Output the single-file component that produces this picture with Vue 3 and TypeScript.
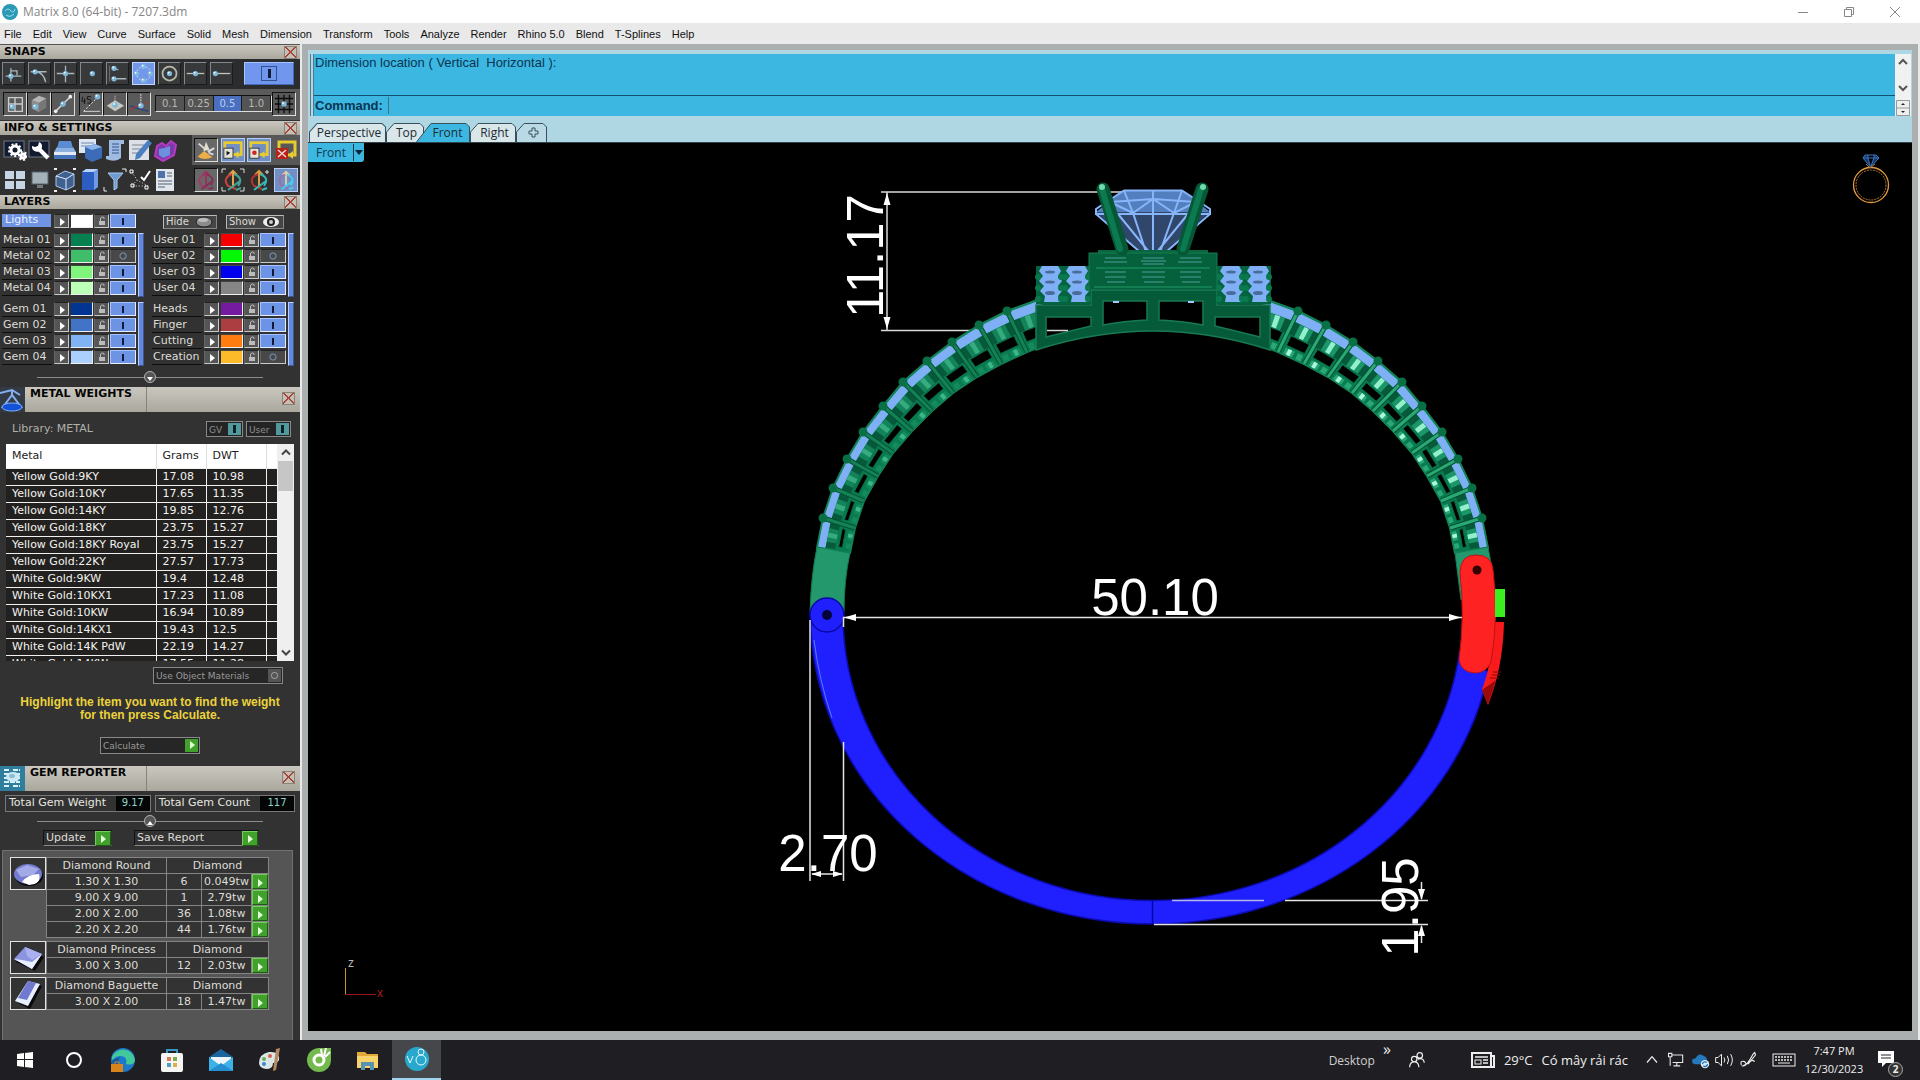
<script setup lang="ts">
import { ref } from 'vue'

interface Icon { name: string; art: string; on?: boolean; raised?: boolean }
interface Layer { name: string; color: string; on: boolean }
interface GemRow { size: string; count: number; weight: string }
interface GemGroup { name: string; kind: string; art: string; rows: GemRow[] }
type Pt = [number, number]

const command = ref('')

const menus = ['File', 'Edit', 'View', 'Curve', 'Surface', 'Solid', 'Mesh', 'Dimension', 'Transform', 'Tools', 'Analyze', 'Render', 'Rhino 5.0', 'Blend', 'T-Splines', 'Help']

const dot = (x: number, y: number, r = 3) => `<circle cx="${x}" cy="${y}" r="${r}" fill="#7db9dc"/><circle cx="${x - 1}" cy="${y - 1}" r="1" fill="#fff"/>`
const ln = (d: string, c = '#a9b8bf', w = 1.5) => `<path d="${d}" fill="none" stroke="${c}" stroke-width="${w}"/>`

const snaps: Icon[] = [
  { name: 'Perpendicular', art: ln('M3 15H21M9 6V21M9 9H16V14') + dot(9, 15) },
  { name: 'Tangent', art: ln('M2 10H20M8 10Q17 11 19 22') + dot(7, 10) },
  { name: 'Intersection', art: ln('M2 12H22M12 3V22') + dot(12, 12) },
  { name: 'Point', art: dot(13, 12) },
  { name: 'Vertex', art: ln('M10 18H22M9 6L13 8') + dot(8, 6) + dot(8, 18) + ln('M3 3V21', '#777', 1) },
  { name: 'Quadrant', on: true, art: '<circle cx="12" cy="12" r="8" fill="none" stroke="#dce9f5" stroke-dasharray="2 2"/>' + dot(12, 4) + dot(12, 20) + dot(4, 12) + dot(20, 12) },
  { name: 'Center', art: '<circle cx="12" cy="12" r="8" fill="none" stroke="#b9b9aa" stroke-width="2"/>' + dot(12, 12) },
  { name: 'Mid', art: ln('M2 12H22', '#c2c4bb') + dot(12, 12) },
  { name: 'End', art: ln('M6 12H22', '#c2c4bb') + dot(5, 12) },
]

const modes: Icon[] = [
  { name: 'Planar', art: ln('M5 5H20V20H5ZM12 5V20M5 12H20', '#c8cccb') + dot(9, 15) },
  { name: 'Solid', art: '<path d="M4 8L12 3L20 6L12 11Z" fill="#b5b5b5"/><path d="M4 8L12 11V21L4 17Z" fill="#8e8e8e"/><path d="M12 11L20 6V16L12 21Z" fill="#777"/>' + dot(8, 15) },
  { name: 'Line', art: ln('M4 20L20 4', '#ddd') + '<circle cx="4" cy="20" r="2" fill="#eee"/><circle cx="20" cy="4" r="2" fill="#eee"/>' + dot(12, 12) },
]
const guides: Icon[] = [
  { name: 'Angle', art: '<path d="M4 20L20 4" stroke="#fff" stroke-dasharray="2 2"/><path d="M4 20H22" stroke="#ddd"/>' + ln('M3 4L2 9H6M5 6V12M12 4H8V7Q12 6 12 9Q12 12 8 11', '#111', 1) + dot(19, 4) },
  { name: 'Plane', art: '<path d="M3 14L12 8L22 14L12 20Z" fill="#c6c6be"/><path d="M12 3V10" stroke="#ddd" stroke-dasharray="1 1"/>' + dot(12, 13) },
  { name: 'Axis', art: ln('M2 14L22 20', '#27418c') + ln('M2 18L22 10', '#b1322d', 1) + '<path d="M14 1V14" stroke="#eee" stroke-dasharray="2 1"/>' + dot(14, 14) },
]
const gridSizes = ['0.1', '0.25', '0.5', '1.0']
const gridIcon = ln('M6 2V22M12 2V22M18 2V22M2 6H22M2 12H22M2 18H22', '#0c0c0c', 1.5) + dot(12, 12)

const gear = (x: number, y: number, r: number) => `<circle cx="${x}" cy="${y}" r="${r}" fill="none" stroke="#fff" stroke-width="3"/><circle cx="${x}" cy="${y}" r="${r + 2}" fill="none" stroke="#fff" stroke-width="2" stroke-dasharray="2 2"/>`
const gumball = (c1: string, c2: string, c3: string) => ln('M12 20V3M8 7L12 3L16 7', c1, 2) + ln('M11 6Q1 10 7 18L15 21', c2, 2) + ln('M13 6Q23 10 17 18M7 22L19 13M15 22L20 20', c3, 2)
const recorder = (inner: string) => `<rect x="3" y="4" width="18" height="13" fill="none" stroke="#e8cb31" stroke-width="3"/><rect x="2" y="10" width="10" height="11" fill="#e4e4d8" stroke="#333"/>${inner}<path d="M13 17L18 13V21Z" fill="#e8cb31"/>`

const infoTop: Icon[] = [
  { name: 'Settings', art: '<rect x="1" y="3" width="20" height="16" fill="#111a2e" stroke="#72798a"/>' + gear(12, 12, 4) + gear(20, 18, 2) },
  { name: 'Tools', art: '<rect x="1" y="3" width="20" height="16" fill="#111a2e" stroke="#72798a"/>' + ln('M9 9L20 20', '#fff', 4) + '<path d="M4 8A5 5 0 1 0 11 4L10 8L7 9Z" fill="#fff"/>' },
  { name: 'Layers', art: '<path d="M4 9H20L23 14H1Z" fill="#8bb1e0"/><path d="M1 14H23V17H1Z" fill="#e2ebf4"/><path d="M1 17H23V21H1Z" fill="#4674bb"/><path d="M6 3H18L20 10H4Z" fill="#5b8bd0"/>' },
  { name: 'Box list', art: '<rect x="1" y="1" width="17" height="14" fill="#dde6f1"/><path d="M3 5H16M3 8H16" stroke="#6f8bb1"/><path d="M7 9L17 6L24 9V20L14 24L7 20Z" fill="#3c6cb8"/><path d="M7 9L17 6L24 9L14 12Z" fill="#8db5e8"/>' },
  { name: 'Script', art: '<path d="M6 2H21V6H18V20Q12 25 3 21V18H6Z" fill="#9fbbe2"/><path d="M9 6H16M9 9H16M9 12H16M9 15H16" stroke="#31548c"/>' },
  { name: 'Notes', art: '<rect x="1" y="2" width="20" height="20" fill="#dbe0e6"/><path d="M4 7H16M4 11H14M4 15H10" stroke="#7d8793"/><path d="M8 16L20 2L24 5L12 20L7 22Z" fill="#4b7fc0"/>' },
  { name: 'Gem', art: '<path d="M4 8L9 5L13 8L18 3L23 7L21 17L10 23L2 18Z" fill="#7c3aa8" stroke="#b53ac4" stroke-width="2"/><path d="M6 11L11 10L17 8V17L10 20L6 17Z" fill="#6d8fdc"/>' },
]
const infoBottom: Icon[] = [
  { name: 'Four views', art: '<path d="M2 3H11V11H2ZM13 3H22V11H13ZM2 13H11V21H2ZM13 13H22V21H13Z" fill="#c6d4e4"/>' },
  { name: 'Display', art: '<rect x="4" y="4" width="16" height="12" fill="#a5b1b8" stroke="#53626d"/><path d="M9 17H15V20H9Z" fill="#73777a"/>' },
  { name: 'Cage', art: '<path d="M3 8L12 3L21 6V18L13 22L3 18Z" fill="#40608f" stroke="#a8c8ef"/><path d="M3 8L13 11L21 6M13 11V22" stroke="#dcecff" fill="none"/>' + ln('M1 1H4M20 1H23M1 23H4M20 23H23', '#eee', 2) },
  { name: 'Manual', art: '<path d="M4 4L8 1H20V19L16 22H4Z" fill="#2c5dc0"/><path d="M4 4L8 1H20L16 4Z" fill="#b6d2f5"/><path d="M16 4L20 1V19L16 22Z" fill="#6f9be6"/>' },
  { name: 'Filter', art: '<path d="M5 5H20L14 12V20L11 22V12Z" fill="#6f9bd2" stroke="#a9caec"/>' + ln('M19 1H23V4M1 19V23H4', '#eee', 1) },
  { name: 'Pick points', art: '<path d="M4 4L9 12L4 18H20L9 12" fill="none" stroke="#ddd" stroke-dasharray="1 2"/><path d="M2 2H5V5H2ZM3 16H6V19H3ZM17 18H20V21H17Z" fill="none" stroke="#fff"/>' + ln('M13 9L16 12L22 3', '#fff', 2) },
  { name: 'Report', art: '<rect x="3" y="1" width="18" height="22" fill="#e1e6ec"/><rect x="5" y="3" width="7" height="7" fill="#4d73aa"/><path d="M14 5H19M14 8H19M5 13H19M5 16H19M5 19H12" stroke="#53606e"/>' },
]
const recordTop: Icon[] = [
  { name: 'Brush', raised: true, art: '<path d="M3 19L10 13L19 20Q9 24 3 19Z" fill="#efae48"/><path d="M9 13L12 3L16 12Z" fill="#e4dfca"/><path d="M4 5L11 11M21 10L14 14M20 17L15 15" stroke="#ddd" stroke-width="2"/>' },
  { name: 'Play', on: true, art: recorder('<path d="M5 13V18L9 15Z" fill="#111"/>') },
  { name: 'Record', on: true, art: recorder('<circle cx="7" cy="15" r="2.5" fill="#cf2820"/>') },
  { name: 'Stop', art: '<rect x="5" y="4" width="16" height="13" fill="none" stroke="#e8cb31" stroke-width="3"/><path d="M14 17L19 13V21Z" fill="#e8cb31"/><rect x="2" y="10" width="12" height="11" fill="#b7221b"/>' + ln('M4 12L12 19M12 12L4 19', '#f0d7d0', 1.5) },
]
const recordBottom: Icon[] = [
  { name: 'Gumball', raised: true, art: gumball('#9e2f5c', '#a63865', '#813057') },
  { name: 'Gumball fit', art: gumball('#e0a74b', '#c8443a', '#43a59a') + ln('M1 5V1H5M19 1H23V5M1 19V23H5M19 23H23V19', '#ddd', 1) },
  { name: 'Gumball align', art: gumball('#d79d45', '#b9332c', '#38b7b7') + ln('M20 2V6M18 4H22', '#ddd', 1) },
  { name: 'Gumball on', on: true, art: gumball('#e5cfa6', '#9c6fa5', '#47cbee') },
]

const L = (name: string, color: string, on = true): Layer => ({ name, color, on })
const layerBlocks: Layer[][][] = [
  [
    [L('Metal 01', '#058050'), L('Metal 02', '#40bd68', false), L('Metal 03', '#80f57d'), L('Metal 04', '#bcffb6')],
    [L('User 01', '#f40000'), L('User 02', '#05f705', false), L('User 03', '#0000ef'), L('User 04', '#858585')],
  ],
  [
    [L('Gem 01', '#023591'), L('Gem 02', '#4173c6'), L('Gem 03', '#7fb3f4'), L('Gem 04', '#acd0fc')],
    [L('Heads', '#741b9f'), L('Finger', '#ac3d40'), L('Cutting', '#ff7c10'), L('Creation', '#fdbb2a', false)],
  ],
]

const metals: [string, string, string][] = [
  ['Yellow Gold:9KY', '17.08', '10.98'],
  ['Yellow Gold:10KY', '17.65', '11.35'],
  ['Yellow Gold:14KY', '19.85', '12.76'],
  ['Yellow Gold:18KY', '23.75', '15.27'],
  ['Yellow Gold:18KY Royal', '23.75', '15.27'],
  ['Yellow Gold:22KY', '27.57', '17.73'],
  ['White Gold:9KW', '19.4', '12.48'],
  ['White Gold:10KX1', '17.23', '11.08'],
  ['White Gold:10KW', '16.94', '10.89'],
  ['White Gold:14KX1', '19.43', '12.5'],
  ['White Gold:14K PdW', '22.19', '14.27'],
  ['White Gold:14KW', '17.55', '11.28'],
]

const gems: GemGroup[] = [
  {
    name: 'Diamond Round', kind: 'Diamond',
    art: '<ellipse cx="18" cy="18" rx="14" ry="10" fill="#070709"/><ellipse cx="17" cy="16" rx="14" ry="10" fill="#737cd0"/><path d="M5 12L16 7L28 11L22 17L10 19Z" fill="#a3aae8"/><path d="M11 24Q17 16 28 16Q31 26 18 27Z" fill="#fff"/>',
    rows: [
      { size: '1.30 X 1.30', count: 6, weight: '0.049tw' },
      { size: '9.00 X 9.00', count: 1, weight: '2.79tw' },
      { size: '2.00 X 2.00', count: 36, weight: '1.08tw' },
      { size: '2.20 X 2.20', count: 44, weight: '1.76tw' },
    ],
  },
  {
    name: 'Diamond Princess', kind: 'Diamond',
    art: '<path d="M5 20L16 8L33 15L24 29Z" fill="#09090c"/><path d="M3 17L14 5L31 12L21 27Z" fill="#8c94e2"/><path d="M3 17L11 18L21 20L31 12L21 27Z" fill="#e8efff"/><path d="M14 5L16 14L21 18L31 12Z" fill="#a9b0f0"/>',
    rows: [{ size: '3.00 X 3.00', count: 12, weight: '2.03tw' }],
  },
  {
    name: 'Diamond Baguette', kind: 'Diamond',
    art: '<path d="M7 25L20 6L31 8L19 31Z" fill="#09090c"/><path d="M4 23L17 3L29 6L17 28Z" fill="#e7efff"/><path d="M7 20L17 3L25 5L16 22Z" fill="#7179cf"/>',
    rows: [{ size: '3.00 X 2.00', count: 18, weight: '1.47tw' }],
  },
]

/* Bracelet geometry: the outer and inner end of each pin on the left shoulder. */
const outer: Pt[] = [[1040, 299], [1007, 311], [979, 325], [952, 342], [927, 361], [903, 382], [883, 406], [863, 432], [847, 459], [833, 488], [823, 518], [817, 548]]
const inner: Pt[] = [[1050, 343], [1027, 352], [1001, 364], [977, 377], [953, 393], [932, 411], [912, 431], [893, 453], [878, 476], [864, 501], [855, 528], [850, 553]]
const at = (i: number, s: number, t: number): Pt => {
  const ox = outer[i][0] + (outer[i + 1][0] - outer[i][0]) * s
  const oy = outer[i][1] + (outer[i + 1][1] - outer[i][1]) * s
  const ix = inner[i][0] + (inner[i + 1][0] - inner[i][0]) * s
  const iy = inner[i][1] + (inner[i + 1][1] - inner[i][1]) * s
  return [Math.round((ox + (ix - ox) * t) * 10) / 10, Math.round((oy + (iy - oy) * t) * 10) / 10]
}
const quad = (i: number, s0: number, s1: number, t0: number, t1: number) =>
  [at(i, s0, t0), at(i, s1, t0), at(i, s1, t1), at(i, s0, t1)].map((p) => p.join(',')).join(' ')
const cells = outer.slice(0, -1).map((_, i) => ({
  blue: quad(i, 0.06, 0.94, 0.04, 0.23),
  shade: quad(i, 0.06, 0.94, 0.25, 0.54),
  mid: quad(i, 0.26, 0.74, 0.25, 0.54),
  shine: quad(i, 0.42, 0.58, 0.25, 0.53),
  hole: quad(i, 0.16, 0.84, 0.55 + i * 0.008, 0.79 - i * 0.005),
  rail: quad(i, 0.18, 0.52, 0.84, 0.98),
  glint: quad(i, 0.28, 0.42, 0.84, 0.98),
  rail2: quad(i, 0.64, 0.84, 0.84, 0.98),
}))
const shoulder = [...outer, ...[...inner].reverse()].map((p) => p.join(',')).join(' ')
const pins = outer.slice(1, -1).map((o, i) => ({ o, n: inner[i + 1] }))
const sides = [
  { id: 'left', shift: '', mid: '#138459', shine: '#36ab80', rail: '#158a5d', glint: '#3bb78a', pin: '#148257' },
  { id: 'right', shift: 'translate(2305 0) scale(-1 1)', mid: '#1c9568', shine: '#93f0cd', rail: '#2aa776', glint: '#a9f7dc', pin: '#2aa875' },
]
const clusters = [1038, 1065, 1219, 1246]

const apps: Icon[] = [
  { name: 'Start', art: '<path d="M4 6L11 5V11H4ZM12 5L20 4V11H12ZM4 12H11V19L4 18ZM12 12H20V20L12 19Z" fill="#fff"/>' },
  { name: 'Search', art: '<circle cx="12" cy="12" r="7" fill="none" stroke="#fff" stroke-width="2"/>' },
  { name: 'Edge', art: '<circle cx="12" cy="12" r="12" fill="#1c78c8"/><path d="M1 9A12 12 0 0 1 24 12Q23 18 15 16Q17 8 9 8Q3 8 1 14Z" fill="#42c99b"/><path d="M9 9Q4 16 12 22Q2 23 1 12Z" fill="#115aa5"/><rect x="0" y="16" width="12" height="8" fill="#d8841c"/><path d="M4 16V14H8V16" fill="none" stroke="#d8841c"/>' },
  { name: 'Store', art: '<path d="M7 6V2H17V6" fill="none" stroke="#3798c6" stroke-width="2"/><rect x="1" y="5" width="22" height="19" rx="2" fill="#f5f5f3"/><path d="M7 9H11V13H7Z" fill="#df7a4f"/><path d="M13 9H17V13H13Z" fill="#7faa50"/><path d="M7 15H11V19H7Z" fill="#4c9fc5"/><path d="M13 15H17V19H13Z" fill="#d9b04a"/>' },
  { name: 'Mail', art: '<path d="M0 9L12 1L24 9V23H0Z" fill="#1b659f"/><path d="M2 9H22V18H2Z" fill="#eef6fb"/><path d="M0 9L12 18L24 9V23H0Z" fill="#3bb2e8"/><path d="M0 23L12 15L24 23Z" fill="#258dd0"/>' },
  { name: 'Paint', art: '<path d="M1 15Q1 6 11 4Q22 3 21 12Q20 15 15 15Q15 21 8 21Q1 20 1 15Z" fill="#dbe6e9"/><circle cx="6" cy="11" r="2" fill="#6fae53"/><circle cx="12" cy="8" r="2" fill="#d4654b"/><circle cx="6" cy="16" r="2" fill="#4486c9"/><path d="M22 0L18 1L15 23L18 22Z" fill="#b6885f"/>' },
  { name: 'Coc Coc', art: '<path d="M24 0V12A12 12 0 1 1 12 0Z" fill="#73b94c"/><circle cx="12" cy="12" r="5" fill="none" stroke="#fff" stroke-width="3"/><circle cx="12" cy="12" r="2" fill="#73b94c"/><path d="M14 1L15 7M19 0L17 8M23 4L18 9" stroke="#fff" stroke-width="2"/>' },
  { name: 'Explorer', art: '<path d="M1 4H9L11 6H22V20H1Z" fill="#e1a937"/><path d="M1 8H22V20H1Z" fill="#f8d36c"/><path d="M5 22V14H18V22H14V18H9V22Z" fill="#5793b2"/>' },
  { name: 'Matrix', on: true, art: '<circle cx="12" cy="12" r="12" fill="#28a8cc"/><path d="M2 9L5 16L8 9" fill="none" stroke="#e8fbff"/><circle cx="16" cy="13" r="5" fill="none" stroke="#e8fbff"/><circle cx="16" cy="5" r="3" fill="none" stroke="#e8fbff"/>' },
]
const tray: Icon[] = [
  { name: 'Hidden icons', art: ln('M6 15L12 8L18 15', '#eee') },
  { name: 'Network', art: ln('M7 6H20V15H8M13 15V19M9 19H17M3 4H7V8H3ZM5 8V19', '#e8e8e8', 1.3) },
  { name: 'OneDrive', art: '<path d="M3 16Q1 10 7 10Q10 3 16 7Q22 9 20 15H16V17H6Z" fill="#2678bd"/><circle cx="18" cy="17" r="5" fill="#d9edf8"/><path d="M15 17A3 3 0 0 1 20 15M21 17A3 3 0 0 1 16 19" fill="none" stroke="#1d6aa9" stroke-width="1.5"/>' },
  { name: 'Volume', art: ln('M2 9H5L9 5V19L5 15H2ZM12 9Q14 12 12 15M16 7Q19 12 16 17M20 5Q24 12 20 19', '#eee', 1.2) },
  { name: 'Pen', art: ln('M4 18Q2 12 8 14Q12 17 6 19Q10 20 18 5L20 3L21 6L12 17Q16 10 20 14', '#eee', 1.4) },
]
</script>

<template>
  <div class="app">
    <header class="titlebar">
      <svg class="logo" viewBox="0 0 16 16"><circle cx="8" cy="8" r="8" fill="#2b98b4" /><path d="M3 7Q6 3 9 7Q12 10 13 5M4 11Q8 14 12 10" fill="none" stroke="#9edcec" /></svg>
      <span class="title">Matrix 8.0 (64-bit) - 7207.3dm</span>
      <div class="winbtns">
        <button aria-label="Minimize"><svg viewBox="0 0 12 12"><path d="M1 6.500H11" stroke="#888" /></svg></button>
        <button aria-label="Restore"><svg viewBox="0 0 12 12"><path d="M1.500 3.500H8.500V10.500H1.500ZM3.500 3V1.500H10.500V8.500H9" fill="none" stroke="#888" /></svg></button>
        <button aria-label="Close"><svg viewBox="0 0 12 12"><path d="M1 1L11 11M11 1L1 11" stroke="#888" /></svg></button>
      </div>
    </header>
    <nav class="menubar"><button v-for="m in menus" :key="m">{{ m }}</button></nav>

    <div class="work">
      <aside class="side">
        <h2 class="bar">SNAPS<button class="x" aria-label="Close snaps"></button></h2>
        <div class="snaps">
          <button v-for="s in snaps" :key="s.name" class="tool" :class="{ on: s.on }" :aria-label="s.name"><svg viewBox="0 0 24 24" v-html="s.art" /></button>
          <button class="master" aria-label="Snaps on"><i></i></button>
        </div>
        <div class="modes">
          <div class="set"><button v-for="s in modes" :key="s.name" :aria-label="s.name"><svg viewBox="0 0 24 24" v-html="s.art" /></button></div>
          <div class="set"><button v-for="s in guides" :key="s.name" :aria-label="s.name"><svg viewBox="0 0 24 24" v-html="s.art" /></button></div>
          <div class="grids"><button v-for="g in gridSizes" :key="g" :class="{ on: g === '0.5' }">{{ g }}</button></div>
          <div class="set"><button aria-label="Grid snap"><svg viewBox="0 0 24 24" v-html="gridIcon" /></button></div>
        </div>

        <h2 class="bar">INFO &amp; SETTINGS<button class="x" aria-label="Close info"></button></h2>
        <div class="info">
          <div class="icons">
            <button v-for="s in infoTop" :key="s.name" :aria-label="s.name"><svg viewBox="0 0 24 24" v-html="s.art" /></button>
          </div>
          <div class="icons rec">
            <button v-for="s in recordTop" :key="s.name" :class="{ on: s.on, raised: s.raised }" :aria-label="s.name"><svg viewBox="0 0 24 24" v-html="s.art" /></button>
          </div>
        </div>
        <div class="info">
          <div class="icons">
            <button v-for="s in infoBottom" :key="s.name" :aria-label="s.name"><svg viewBox="0 0 24 24" v-html="s.art" /></button>
          </div>
          <div class="icons rec plain">
            <button v-for="s in recordBottom" :key="s.name" :class="{ on: s.on, raised: s.raised }" :aria-label="s.name"><svg viewBox="0 0 24 24" v-html="s.art" /></button>
          </div>
        </div>

        <h2 class="bar">LAYERS<button class="x" aria-label="Close layers"></button></h2>
        <div class="layers">
          <div class="lights">
            <div class="layer">
              <span class="lname sel">Lights</span>
              <button class="cell arrow" aria-label="Lights options"></button>
              <button class="cell sw" style="background: #ffffff" aria-label="Lights colour"></button>
              <button class="cell lock" aria-label="Lock Lights"><svg viewBox="0 0 8 10"><path d="M2.500 5V2Q4 0 6 1.500V3" fill="none" stroke="#bbb" /><rect x="1" y="5" width="6" height="4" fill="#bbb" /></svg></button>
              <button class="cell tog on" aria-label="Toggle Lights"></button>
            </div>
            <button class="hs hide">Hide <svg viewBox="0 0 18 12"><ellipse cx="9" cy="6" rx="8" ry="5" fill="#8c8c8c" stroke="#222" /><ellipse cx="8" cy="4" rx="5" ry="2" fill="#bbb" /></svg></button>
            <button class="hs show">Show <svg viewBox="0 0 18 12"><ellipse cx="9" cy="6" rx="8" ry="5" fill="#eee" /><circle cx="9" cy="6" r="4" fill="#222" /><circle cx="9" cy="6" r="2" fill="#ccc" /></svg></button>
          </div>
          <div v-for="(block, b) in layerBlocks" :key="b" class="block">
            <div v-for="(col, c) in block" :key="c" class="lcol">
              <div>
                <div v-for="l in col" :key="l.name" class="layer">
                  <span class="lname">{{ l.name }}</span>
                  <button class="cell arrow" :aria-label="l.name + ' options'"></button>
                  <button class="cell sw" :style="{ background: l.color }" :aria-label="l.name + ' colour'"></button>
                  <button class="cell lock" :aria-label="'Lock ' + l.name"><svg viewBox="0 0 8 10"><path d="M2.500 5V2Q4 0 6 1.500V3" fill="none" stroke="#bbb" /><rect x="1" y="5" width="6" height="4" fill="#bbb" /></svg></button>
                  <button class="cell tog" :class="{ on: l.on }" :aria-label="'Toggle ' + l.name"></button>
                </div>
              </div>
              <i class="vbar"></i>
            </div>
          </div>
          <div class="fold"><button aria-label="Expand layers"></button></div>
        </div>

        <h2 class="bar big">
          <svg class="hicon" viewBox="0 0 25 25"><rect width="25" height="25" fill="#333a45" /><path d="M0 6L12 3L20 8M12 3V10M3 20L12 8L21 20Z" fill="none" stroke="#85aff0" stroke-width="2" /><ellipse cx="12" cy="20" rx="10" ry="4" fill="#1551d8" stroke="#79b1ff" /></svg>
          <span>METAL WEIGHTS</span><button class="x" aria-label="Close metal weights"></button>
        </h2>
        <div class="library">
          <span>Library: METAL</span>
          <button class="flag">GV<i></i></button>
          <button class="flag user">User<i></i></button>
        </div>
        <div class="tablebox">
          <table class="metals">
            <thead><tr><th class="c1">Metal</th><th class="c2">Grams</th><th class="c3">DWT</th><th></th></tr></thead>
            <tbody><tr v-for="m in metals" :key="m[0]"><td>{{ m[0] }}</td><td>{{ m[1] }}</td><td>{{ m[2] }}</td><td></td></tr></tbody>
          </table>
          <div class="scroll">
            <svg viewBox="0 0 16 16"><path d="M4 10L8 6L12 10" fill="none" stroke="#444" stroke-width="2" /></svg>
            <i></i>
            <svg class="dn" viewBox="0 0 16 16"><path d="M4 6L8 10L12 6" fill="none" stroke="#444" stroke-width="2" /></svg>
          </div>
        </div>
        <button class="obj">Use Object Materials<i></i></button>
        <p class="hint">Highlight the item you want to find the weight<br>for then press Calculate.</p>
        <button class="calc">Calculate<i class="go"></i></button>

        <h2 class="bar big">
          <svg class="hicon" viewBox="0 0 25 25"><rect width="25" height="25" fill="#2f7e9d" /><path d="M4 4H10M13 4H20M4 8H20M4 12H20M4 16H20M4 20H10M13 20H20" stroke="#d6f3fa" stroke-width="2" stroke-dasharray="5 1" /><ellipse cx="13" cy="11" rx="7" ry="5" fill="#c9e9f5" /><ellipse cx="12" cy="10" rx="3" ry="2" fill="#8dbbd0" /></svg>
          <span>GEM REPORTER</span><button class="x" aria-label="Close gem reporter"></button>
        </h2>
        <div class="totals">
          <div class="total"><span>Total Gem Weight</span><output>9.17</output></div>
          <div class="total"><span>Total Gem Count</span><output>117</output></div>
        </div>
        <div class="fold up"><button aria-label="Collapse report"></button></div>
        <div class="acts">
          <button class="act">Update<i class="go"></i></button>
          <button class="act save">Save Report<i class="go"></i></button>
        </div>
        <div class="report">
          <div v-for="g in gems" :key="g.name" class="gem">
            <svg class="thumb" viewBox="0 0 34 31" v-html="g.art" />
            <table>
              <colgroup><col class="g1"><col class="g2"><col class="g3"><col class="g4"></colgroup>
              <tbody>
                <tr><th>{{ g.name }}</th><th colspan="3">{{ g.kind }}</th></tr>
                <tr v-for="r in g.rows" :key="r.size"><td>{{ r.size }}</td><td>{{ r.count }}</td><td>{{ r.weight }}</td><td><button class="go" :aria-label="'Select ' + r.size"></button></td></tr>
              </tbody>
            </table>
          </div>
        </div>
      </aside>

      <main class="stage">
        <section class="console">
          <i class="grip"></i>
          <div class="cmd">
            <p class="history">Dimension location ( Vertical&nbsp; Horizontal ):</p>
            <div class="prompt"><label for="cmd">Command:</label><input id="cmd" v-model="command" type="text"></div>
          </div>
          <div class="cscroll">
            <svg viewBox="0 0 16 16"><path d="M4 10L8 6L12 10" fill="none" stroke="#555" stroke-width="2" /></svg>
            <svg class="down" viewBox="0 0 16 16"><path d="M4 6L8 10L12 6" fill="none" stroke="#555" stroke-width="2" /></svg>
            <svg viewBox="0 0 16 16"><path d="M1.500 0.500H14.500V15.500H1.500ZM1 8H15" fill="#eee" stroke="#999" /><path d="M6 5L8 3L10 5ZM6 11L8 13L10 11Z" fill="#222" /></svg>
          </div>
        </section>
        <nav class="tabs">
          <button class="tab t1"><svg viewBox="0 0 76 19" preserveAspectRatio="none"><path d="M.5 19V9L8 .5H72L75.500 4V19" /></svg><span>Perspective</span></button>
          <button class="tab t2"><svg viewBox="0 0 38 19" preserveAspectRatio="none"><path d="M.5 19V9L8 .5H34L37.500 4V19" /></svg><span>Top</span></button>
          <button class="tab t3"><svg viewBox="0 0 54 19" preserveAspectRatio="none"><path d="M.5 19L15 .5H50L53.500 4V19" /></svg><span>Front</span></button>
          <button class="tab t4"><svg viewBox="0 0 46 19" preserveAspectRatio="none"><path d="M.5 19V9L8 .5H42L45.500 4V19" /></svg><span>Right</span></button>
          <button class="tab t5" aria-label="Add viewport"><svg viewBox="0 0 31 19" preserveAspectRatio="none"><path d="M.5 19V9L8 .5H27L30.500 4V19" /><path d="M16 5H19V8H22V11H19V14H16V11H13V8H16Z" class="plus" /></svg></button>
        </nav>
        <section class="view">
          <button class="vlabel"><span>Front</span><i></i></button>
          <svg class="scene" viewBox="308 143 1604 888" preserveAspectRatio="xMidYMid meet">
            <g stroke="#d9d9d9" stroke-width="1.500">
              <path d="M881 192H1123M881 330.500H1068M887 192V330" />
            </g>
            <g v-for="s in sides" :key="s.id" :transform="s.shift || undefined">
              <polygon :points="shoulder" fill="#087c50" stroke="#128356" stroke-width="2" />
              <g v-for="(c, i) in cells" :key="i">
                <polygon :points="c.shade" fill="#06593a" />
                <polygon :points="c.mid" :fill="s.mid" />
                <polygon :points="c.shine" :fill="s.shine" />
                <polygon :points="c.hole" fill="#000" stroke="#0a6b45" />
                <polygon :points="c.rail" :fill="s.rail" />
                <polygon :points="c.glint" :fill="s.glint" />
                <polygon :points="c.rail2" :fill="s.rail" />
                <polygon :points="c.blue" fill="#7fb0f5" stroke="#7fb0f5" stroke-width="1" stroke-linejoin="round" />
              </g>
              <g v-for="(p, i) in pins" :key="'p' + i">
                <line :x1="p.o[0]" :y1="p.o[1]" :x2="p.n[0]" :y2="p.n[1]" stroke="#04502f" stroke-width="5" />
                <line :x1="p.o[0]" :y1="p.o[1]" :x2="p.n[0]" :y2="p.n[1]" :stroke="s.pin" stroke-width="3" />
                <circle :cx="p.o[0]" :cy="p.o[1]" r="4.500" fill="#087044" />
              </g>
            </g>
            <path d="M817 547L850 553Q844 580 844 612H810Q811 576 817 547Z" fill="#22986c" stroke="#137a51" />
            <path d="M1488 547L1455 553L1461 600H1494Q1494 576 1488 547Z" fill="#22986c" stroke="#137a51" />
            <path d="M810.500 615A342 309 0 0 0 1152.500 924A342 309 0 0 0 1488.500 672L1459.500 652A309.500 285.500 0 0 1 1152.500 900.500A309.500 285.500 0 0 1 843 615Z" fill="#2020ff" stroke="#0b0bb0" stroke-width="1.500" />
            <path d="M1152.500 901V924" stroke="#0707a0" stroke-width="1.500" />
            <path d="M814 640Q819 680 832 718" fill="none" stroke="#5a78ff" />
            <circle cx="827" cy="615" r="17" fill="#2020ff" stroke="#0a0aa5" stroke-width="1.500" />
            <circle cx="827" cy="615" r="5" fill="#03033a" />
            <path d="M1494 622H1504Q1503 668 1488 705L1482 690Q1493 660 1494 622Z" fill="#f91b1b" />
            <path d="M1482 690L1496 680L1488 705Z" fill="#9c0b0b" />
            <path d="M1493 672H1501M1492 675H1500M1490 678H1499" stroke="#8d0808" />
            <path d="M1460 573Q1460 555 1476 555Q1492 555 1493 570Q1499 615 1491 662Q1486 673 1475 673Q1461 672 1459 660Q1465 615 1460 573Z" fill="#ff2222" stroke="#c21010" />
            <circle cx="1477" cy="570" r="4.500" fill="#300" />
            <rect x="1495" y="589" width="10" height="28" fill="#3bee22" />

            <path d="M1036 305H1091V290H1217V305H1270V350Q1153 312 1036 350Z" fill="#055a39" stroke="#187a53" stroke-width="1.500" />
            <g fill="#000" stroke="#187a53" stroke-width="1.500">
              <path d="M1046 317H1091V326L1046 337Z" /><path d="M1260 317H1215V326L1260 337Z" />
              <path d="M1103 301H1147V320Q1124 321 1103 325Z" /><path d="M1203 301H1159V320Q1182 321 1203 325Z" />
            </g>
            <path d="M1047 330.500H1068" stroke="#d9d9d9" stroke-width="1.500" />
            <path d="M1113 302H1119M1188 302H1194" stroke="#a6c7fb" stroke-width="2" />
            <g v-for="x in clusters" :key="x">
              <rect :x="x - 2" y="266" width="27" height="38" fill="#056440" />
              <path :d="`M${x + 4} 266h16l3 5-3 5 4 5-4 5 4 5-4 5 2 6h-16l1-6-5-5 4-5-5-5 4-5-4-5Z`" fill="#7fb0f5" />
              <g fill="#4a6c9d"><ellipse :cx="x + 12" cy="272" rx="5" ry="1.500" /><ellipse :cx="x + 12" cy="282" rx="5" ry="1.500" /><ellipse :cx="x + 12" cy="293" rx="5" ry="2" /></g>
              <g fill="#0a7a4e"><circle :cx="x" cy="277" r="3" /><circle :cx="x" cy="288" r="3" /><circle :cx="x" cy="299" r="3" /><circle :cx="x + 23" cy="277" r="3" /><circle :cx="x + 23" cy="288" r="3" /><circle :cx="x + 23" cy="299" r="3" /></g>
            </g>

            <path d="M1096 212L1124 190.500H1182L1210 212L1166 252H1140Z" fill="#30476b" />
            <path d="M1096 212L1124 190.500H1182L1210 212Z" fill="#547fbe" />
            <path d="M1124 190.500H1182L1210 209V214H1096V209ZM1096 214L1140 252M1210 214L1166 252M1124 190.500L1133 213L1153 199L1174 213L1182 190.500M1110 202L1133 213L1146 252M1196 202L1174 213L1160 252M1153 191V252M1110 202L1153 199L1196 202M1118 214L1149 252M1188 214L1157 252" fill="none" stroke="#86b5fa" stroke-width="2" />
            <rect x="1098" y="250" width="110" height="5" fill="#08673f" />
            <rect x="1089" y="253" width="128" height="37" fill="#05603c" stroke="#187a53" />
            <path d="M1096 268H1210M1094 287H1212" stroke="#127d51" stroke-width="2" />
            <g stroke="#4f9f97" stroke-width="1">
              <path d="M1105 258H1126M1104 262H1127M1143 258H1164M1141 261H1166M1143 264H1164M1180 258H1201M1178 262H1202" />
              <path d="M1105 272H1126M1105 277H1126M1107 282H1125M1142 272H1165M1142 277H1165M1144 282H1164M1180 272H1201M1180 277H1201M1182 282H1200" />
            </g>
            <g stroke-linecap="round">
              <path d="M1103 189L1122 249M1202 189L1183 249" stroke="#055735" stroke-width="13" />
              <path d="M1102 189L1120 249M1201 189L1183 249" stroke="#0b7a50" stroke-width="6" />
            </g>
            <circle cx="1102" cy="187" r="3" fill="#71dbae" /><circle cx="1203" cy="187" r="3" fill="#71dbae" />

            <g stroke="#e4e4e4" stroke-width="1.500">
              <path d="M843 617.500H1462M810 620V881M843.500 742V881M812 874H842M843.500 617V627" />
              <path d="M1172 900.500H1264" stroke="#b5b5e8" />
              <path d="M1285 900.500H1428M1154 924.500H1428M1421.500 882V899M1421.500 926V943" />
            </g>
            <g fill="#fff">
              <path d="M887 193L883.500 205H890.500ZM887 329L883.500 317H890.500Z" />
              <path d="M844 617.500L856 614V621ZM1461 617.500L1449 614V621Z" />
              <path d="M811 874L821 871V877ZM843 874L833 871V877Z" />
              <path d="M1421.500 900L1418 889H1425ZM1421.500 925L1418 936H1425Z" />
            </g>
            <g class="dims">
              <text x="1155" y="615" text-anchor="middle">50.10</text>
              <text x="828" y="871" text-anchor="middle">2.70</text>
              <text transform="translate(883 256) rotate(-90)" text-anchor="middle">11.17</text>
              <text transform="translate(1418 907) rotate(-90)" text-anchor="middle">1.95</text>
            </g>

            <path d="M345.500 968V994.500" stroke="#c39a27" /><path d="M345 994.500H376" stroke="#9c1818" />
            <text x="348" y="967" class="axis" fill="#b9b9b9">z</text>
            <text x="377" y="997" class="axis" fill="#a51c1c">x</text>
            <circle cx="1871" cy="185" r="17.500" fill="none" stroke="#e39a3c" stroke-width="1.300" />
            <circle cx="1871" cy="185" r="15" fill="none" stroke="#b87a30" stroke-width="1" stroke-dasharray="2 1" />
            <path d="M1865 155H1876L1879 158L1870.500 167L1863 158ZM1863 158H1879M1868 155V158L1870.500 167L1874 158V155" fill="#17365f" stroke="#3a74c4" />
            <path d="M1866 164L1870 168L1875 164" fill="none" stroke="#b87a30" stroke-width="1" />
          </svg>
        </section>
      </main>
    </div>

    <footer class="taskbar">
      <button v-for="a in apps" :key="a.name" class="app-btn" :class="{ on: a.on }" :aria-label="a.name"><svg viewBox="0 0 24 24" v-html="a.art" /></button>
      <div class="tray">
        <span class="desk">Desktop</span><span class="more">»</span>
        <button class="people" aria-label="People"><svg viewBox="0 0 24 24"><path d="M9 14A3 3 0 1 1 9 8A3 3 0 1 1 9 14ZM4 20Q4 14 9 14Q14 14 14 20M15 10A3 3 0 1 1 15 4A3 3 0 1 1 15 10ZM13 11Q19 9 20 15" fill="none" stroke="#eee" stroke-width="1.300" /></svg></button>
        <button class="weather"><svg viewBox="0 0 24 18"><path d="M1 2H20V16H1ZM20 5H23V16H20" fill="none" stroke="#eee" stroke-width="2" /><path d="M4 6H17M12 9H17M12 12H17" stroke="#eee" stroke-width="1.500" /><rect x="4" y="9" width="6" height="4" fill="none" stroke="#eee" /></svg><span>29°C</span><span>Có mây rải rác</span></button>
        <button v-for="t in tray" :key="t.name" class="ti" :aria-label="t.name"><svg viewBox="0 0 24 24" v-html="t.art" /></button>
        <button class="kbd" aria-label="Keyboard"><svg viewBox="0 0 24 16"><rect x="1" y="2" width="22" height="12" fill="none" stroke="#eee" /><path d="M3 5H21M3 8H21" stroke="#eee" stroke-width="1.500" stroke-dasharray="2 1" /><path d="M6 11H18" stroke="#eee" /></svg></button>
        <div class="clock"><time>7:47 PM</time><time>12/30/2023</time></div>
        <button class="note" aria-label="Notifications"><svg viewBox="0 0 24 24"><path d="M1 3H17V15H9L5 19V15H1Z" fill="#fff" /><path d="M4 7H14M4 10H14" stroke="#222" /></svg><b>2</b></button>
      </div>
    </footer>
  </div>
</template>

<style>
body { margin: 0; background: #000; }
</style>

<style scoped>
* { box-sizing: border-box; }
button { margin: 0; padding: 0; border: 0; background: none; font: inherit; color: inherit; display: block; flex: none; text-align: left; }
button svg { display: block; width: 100%; height: 100%; }
i { font-style: normal; display: block; flex: none; }
.app { min-height: 100vh; display: flex; flex-direction: column; font-family: "DejaVu Sans", Verdana, sans-serif; font-size: 11px; }

.titlebar { height: 23px; background: #fff; display: flex; align-items: center; padding-left: 2px; color: #858585; font: 12px "Open Sans", "Noto Sans", sans-serif; }
.logo { width: 16px; height: 16px; margin-right: 5px; }
.winbtns { margin-left: auto; display: flex; padding-right: 2px; }
.winbtns button { width: 46px; height: 20px; display: flex; justify-content: center; align-items: center; }
.winbtns svg { width: 12px; height: 12px; }
.menubar { height: 21px; background: #e9e9e9; display: flex; align-items: center; gap: 11px; padding-left: 4px; font: 11px "Liberation Sans", Arial, sans-serif; color: #111; }

.work { flex: 1; display: flex; min-height: 0; background: #e9e9e9; }
.side { width: 300px; flex: none; background: #323232; color: #dedcd5; border-top: 1px solid #555; overflow: hidden; display: flex; flex-direction: column; }
.bar { flex: none; margin: 0; height: 14px; display: flex; align-items: center; padding: 0 3px 0 4px; font-size: 11px; line-height: 14px; font-weight: bold; color: #050505; background: linear-gradient(#c9c7bf, #aaa79d); white-space: nowrap; }
.x { width: 13px; height: 13px; margin-left: auto; background: linear-gradient(45deg, transparent 46%, #a8433c 46%, #a8433c 56%, transparent 56%), linear-gradient(-45deg, transparent 46%, #a8433c 46%, #a8433c 56%, transparent 56%), #c4c0b6; border: 1px solid #8a8378; }
.snaps { height: 30px; background: #2b2c2e; display: flex; align-items: center; gap: 3px; padding: 0 6px 2px 2px; }
.tool { width: 23px; height: 23px; background: #38393b; border: 1px solid; border-color: #85878a #1b1b1b #1b1b1b #85878a; }
.tool.on { background: #7398ea; border-color: #c3d5ff; }
.master { width: 50px; height: 23px; margin-left: auto; background: #7096ee; border: 1px solid; border-color: #a8c4ff #4668b8 #4668b8 #a8c4ff; display: flex; align-items: center; justify-content: center; }
.master i { width: 16px; height: 15px; border: 1px solid #35528f; background: linear-gradient(#131c33, #131c33) center / 3px 9px no-repeat; }
.modes { height: 32px; background: #5b5b5b; border-bottom: 1px solid #333; display: flex; align-items: center; padding: 0 4px 2px 3px; }
.set { display: flex; margin-right: 4px; }
.set:last-child { margin: 0; }
.set button { width: 24px; height: 24px; background: #5a5a5a; border: 1px solid; border-color: #111 #ddd #ddd #111; }
.grids { display: flex; flex: 1; border: 1px solid; border-color: #111 #ddd #ddd #111; }
.grids button { flex: 1; height: 15px; text-align: center; line-height: 15px; background: #545454; color: #b8b8b0; border-right: 1px solid #1c1c1c; font-size: 10px; }
.grids .on { background: #4a6fbf; color: #b9cdf5; }
.info { height: 30px; display: flex; justify-content: space-between; background: #303031; padding-left: 3px; }
.icons { display: flex; align-items: center; gap: 1px; }
.icons button { width: 24px; height: 24px; }
.icons.rec { background: #585858; width: 108px; padding: 0 2px; justify-content: space-between; }
.icons.rec.plain { background: #303031; }
.icons .on { background: #718fc4; border: 1px solid #b6cdf5; }
.icons .raised { background: #686868; border: 1px solid; border-color: #111 #ddd #ddd #111; }

.layers { height: 178px; flex: none; padding-top: 5px; }
.lights { display: flex; padding-left: 2px; height: 19px; }
.layer { display: flex; height: 16px; gap: 1px; }
.lname { width: 50px; height: 15px; line-height: 13px; border-bottom: 1px solid #0d0d0d; white-space: nowrap; padding-left: 1px; margin-right: 1px; }
.lname.sel { background: #6f94e4; color: #e9f0ff; width: 49px; height: 13px; line-height: 12px; padding-left: 3px; margin-right: 2px; border: 0; }
.cell { height: 14px; border: 1px solid; border-color: #222 #c9c9c9 #c9c9c9 #666; background: #555; }
.arrow { width: 15px; }
.arrow::after, .go::after { content: ""; display: block; margin: 2px 0 0 5px; border-left: 5px solid #fff; border-top: 4px solid transparent; border-bottom: 4px solid transparent; width: 0; }
.sw { width: 23px; border-color: #444 #eee #eee #333; }
.lock { width: 15px; }
.lock svg { width: 8px; height: 10px; margin: 1px auto; }
.tog { width: 26px; background: radial-gradient(circle at center, #484848 2px, #7391b5 3px, #484848 4px); }
.tog.on { background: linear-gradient(#101a36, #101a36) center / 2px 7px no-repeat, #6d93e4; border-color: #a6c2ff #e5edff #e5edff #a6c2ff; }
.hs { height: 14px; border: 1px solid; border-color: #bbb #888 #888 #bbb; background: #454545; display: flex; align-items: center; gap: 6px; padding-left: 2px; font-size: 10px; line-height: 12px; margin-top: 1px; }
.hs svg { width: 18px; height: 12px; }
.hide { width: 54px; margin-left: 27px; }
.show { width: 58px; margin-left: 9px; }
.block { display: flex; padding-left: 2px; margin-bottom: 5px; height: 64px; gap: 8px; }
.lcol { display: flex; gap: 2px; }
.vbar { width: 6px; height: 64px; background: #6488dc; border: 1px solid; border-color: #b9ceff #3d5797 #3d5797 #b9ceff; }
.fold { height: 12px; flex: none; display: flex; align-items: center; justify-content: center; background: linear-gradient(#8b8b8b, #8b8b8b) center / 226px 1px no-repeat; }
.fold button { width: 12px; height: 12px; border-radius: 50%; background: #555; border: 1px solid #b4b4b4; }
.fold button::after { content: ""; display: block; margin: 3px auto 0; width: 0; border-top: 4px solid #fff; border-left: 3px solid transparent; border-right: 3px solid transparent; }
.fold.up { height: 10px; }
.fold.up button::after { border-top: 0; border-bottom: 4px solid #fff; }

.bar.big { height: 25px; padding: 0 5px 0 0; align-items: flex-start; }
.big .x { margin-top: 5px; }
.hicon { width: 25px; height: 25px; }
.big span { width: 122px; height: 25px; padding-left: 5px; line-height: 13px; border-right: 1px solid #86837a; }
.library { height: 32px; display: flex; padding: 9px 9px 0 12px; color: #b0b0aa; gap: 3px; line-height: 15px; flex: none; }
.library span { flex: 1; }
.flag { height: 16px; width: 37px; border: 1px solid #888; background: #242424; display: flex; justify-content: space-between; padding: 1px 1px 1px 2px; font-size: 9px; line-height: 14px; color: #8f8f8f; }
.flag.user { width: 45px; }
.flag i { width: 13px; background: linear-gradient(#0e2022, #0e2022) center / 3px 8px no-repeat, #51999f; }
.tablebox { height: 217px; flex: none; margin: 0 6px; display: flex; overflow: hidden; background: #222120; }
.metals { flex: 1; width: 271px; align-self: flex-start; border-collapse: collapse; table-layout: fixed; color: #f2f2ee; }
.metals th { background: #fff; color: #222; height: 24px; font-weight: normal; text-align: left; padding: 0 0 0 6px; border-right: 1px solid #ddd; }
.metals td { height: 17px; line-height: 14px; padding: 0 0 0 6px; border: 1px solid #f0f0ee; border-left: 0; white-space: nowrap; }
.metals tr :last-child { border-right: 0; }
.c1 { width: 150px; }
.c2 { width: 50px; }
.c3 { width: 60px; }
.scroll { width: 17px; background: #efefef; display: flex; flex-direction: column; align-items: center; }
.scroll svg { width: 16px; height: 17px; }
.scroll i { width: 15px; height: 30px; background: #c6c6c6; }
.scroll .dn { margin-top: auto; }
.obj { margin: 6px 17px 0 auto; width: 130px; height: 17px; border: 1px solid #888; background: #262626; color: #999; font-size: 9px; line-height: 16px; padding: 0 1px 0 2px; display: flex; justify-content: space-between; white-space: nowrap; }
.obj i { width: 13px; height: 13px; margin-top: 1px; background: radial-gradient(circle at center, #555 2px, #999 3px, #555 4px); }
.hint { margin: 12px 0 0; height: 26px; flex: none; text-align: center; font: bold 12px/13px "Liberation Sans", Arial, sans-serif; color: #ecd23c; white-space: nowrap; }
.calc { margin: 15px 0 12px 100px; width: 100px; height: 17px; border: 1px solid #888; background: #262626; color: #999; font-size: 9px; line-height: 15px; padding: 1px 1px 1px 2px; display: flex; justify-content: space-between; }
.go { width: 16px; height: 16px; background: #42a12d; border: 1px solid; border-color: #76cc5e #1d5c12 #1d5c12 #76cc5e; }
.go::after { margin-top: 3px; border-left-color: #e2ffd8; }
.calc .go { width: 13px; height: 13px; border: 0; }
.calc .go::after { margin-top: 2px; }
.totals { height: 25px; display: flex; gap: 4px; padding: 4px 5px; flex: none; }
.total { display: flex; flex: 1 1 auto; justify-content: space-between; border: 1px solid #777; line-height: 14px; padding-left: 3px; white-space: nowrap; color: #e6e6e0; }
.total output { width: 34px; background: #040606; color: #8fd4d1; text-align: center; font-size: 10px; }
.acts { display: flex; height: 24px; padding: 4px 0 0 43px; flex: none; }
.act { display: flex; width: 69px; height: 16px; border: 1px solid; border-color: #111 transparent #888 #111; line-height: 14px; padding-left: 2px; justify-content: space-between; }
.act.save { width: 125px; margin-left: 22px; }
.act .go { height: 15px; }
.report { flex: 1; margin: 0 7px 0 2px; background: #555; border: 1px solid #707070; border-bottom: 0; padding: 6px 0 0 7px; }
.gem { display: flex; align-items: flex-start; margin-bottom: 3px; }
.thumb { width: 36px; height: 33px; flex: none; background: #333; border: 1px solid #e2e2e2; }
.gem table { border-collapse: collapse; table-layout: fixed; width: 222px; background: #333; }
.gem th, .gem td { height: 16px; line-height: 14px; padding: 0; border: 1px solid #858585; text-align: center; font-weight: normal; white-space: nowrap; }
.g1 { width: 120px; }
.g2 { width: 35px; }
.g3 { width: 50px; }
.g4 { width: 17px; }
.gem .go { height: 15px; }
.gem .go::after { margin-top: 2px; }

.stage { flex: 1; min-width: 0; display: flex; flex-direction: column; background: #afd6e3; border: solid #abafb0; border-width: 6px 6px 9px 6px; margin: 0 2px; }
.console { display: flex; padding: 4px 0 0 2px; height: 67px; flex: none; }
.grip { width: 4px; border: 1px solid #54778a; border-width: 0 1px; height: 62px; }
.cmd { flex: 1; background: #3bb7e2; height: 62px; font: 13px "Liberation Sans", Arial, sans-serif; color: #0b3450; }
.history { margin: 0; height: 42px; line-height: 17px; padding-left: 1px; border-bottom: 1px solid #11516f; white-space: pre; }
.prompt { display: flex; height: 18px; align-items: center; padding-left: 1px; }
.prompt label { font-weight: bold; }
.prompt input { flex: 1; margin-left: 5px; height: 17px; padding: 0; border: 0; border-left: 1px solid #3d7188; background: none; font: inherit; outline: 0; }
.cscroll { width: 16px; height: 62px; display: flex; flex-direction: column; background: #f1f1f1; margin-right: 1px; }
.cscroll svg { width: 16px; height: 16px; }
.cscroll .down { margin: 10px 0 4px; }
.tabs { display: flex; height: 26px; padding: 6px 0 0 1px; flex: none; font: 12px "Open Sans", "Noto Sans", sans-serif; color: #1e2b33; border-bottom: 1px solid #31434b; }
.tab { position: relative; height: 19px; line-height: 17px; text-align: center; }
.tab > svg { position: absolute; inset: 0; fill: #d9e6ea; stroke: #38505b; }
.tab > span { position: relative; }
.t1 { width: 77px; }
.t2 { width: 38px; }
.t3 { width: 54px; margin-left: -8px; }
.t4 { width: 46px; }
.t5 { width: 31px; }
.tab.t3 > svg { fill: #3bb7e2; }
.t3 > span { padding-left: 9px; }
.t2 > span, .t1 > span, .t4 > span { padding-left: 3px; }
.tab.t5 > svg { fill: #b9dae4; }
.view { flex: 1; min-height: 0; background: #000; position: relative; display: flex; }
.scene { width: 100%; flex: 1; min-width: 0; display: block; }
.dims { fill: #fff; font: 51px "Liberation Sans", Arial, sans-serif; }
.axis { font: 12px "Liberation Sans", Arial, sans-serif; }
.vlabel { position: absolute; left: 0; top: 0; height: 19px; width: 56px; background: #3bb7e2; display: flex; align-items: center; font: 12px "Open Sans", "Noto Sans", sans-serif; color: #10384e; border-radius: 0 0 3px 0; }
.vlabel span { width: 46px; padding-left: 8px; border-right: 1px solid #10384e; line-height: 17px; }
.vlabel i { border-top: 5px solid #0a2533; border-left: 4px solid transparent; border-right: 4px solid transparent; margin-left: 1px; }

.taskbar { height: 40px; flex: none; background: #1f1f23; display: flex; align-items: center; color: #eee; font: 12px "Open Sans", "Noto Sans", sans-serif; }
.app-btn { width: 49px; height: 40px; display: flex; align-items: center; justify-content: center; }
.app-btn svg { width: 24px; height: 24px; }
.app-btn.on { background: #46474b; border-bottom: 2px solid #9fd5ee; }
.tray { margin-left: auto; display: flex; align-items: center; height: 40px; padding-right: 19px; white-space: nowrap; }
.desk { color: #cfcfcf; }
.more { font-size: 16px; margin: 0 0 22px 8px; line-height: 16px; }
.people { width: 22px; height: 22px; margin: 0 43px 0 15px; }
.weather { display: flex; align-items: center; gap: 9px; margin-right: 12px; font-size: 13px; }
.weather svg { width: 24px; height: 18px; }
.ti { width: 20px; height: 20px; margin: 0 2px; }
.ti svg { width: 20px; height: 20px; }
.kbd { width: 24px; height: 16px; margin: 0 8px 0 12px; }
.clock { display: flex; flex-direction: column; align-items: center; line-height: 18px; font-size: 11px; width: 60px; }
.note { width: 24px; height: 24px; margin-left: 13px; position: relative; }
.note b { position: absolute; right: -2px; bottom: -5px; width: 15px; height: 15px; border-radius: 50%; background: #333; border: 1px solid #aaa; font-size: 10px; line-height: 13px; text-align: center; }
</style>
